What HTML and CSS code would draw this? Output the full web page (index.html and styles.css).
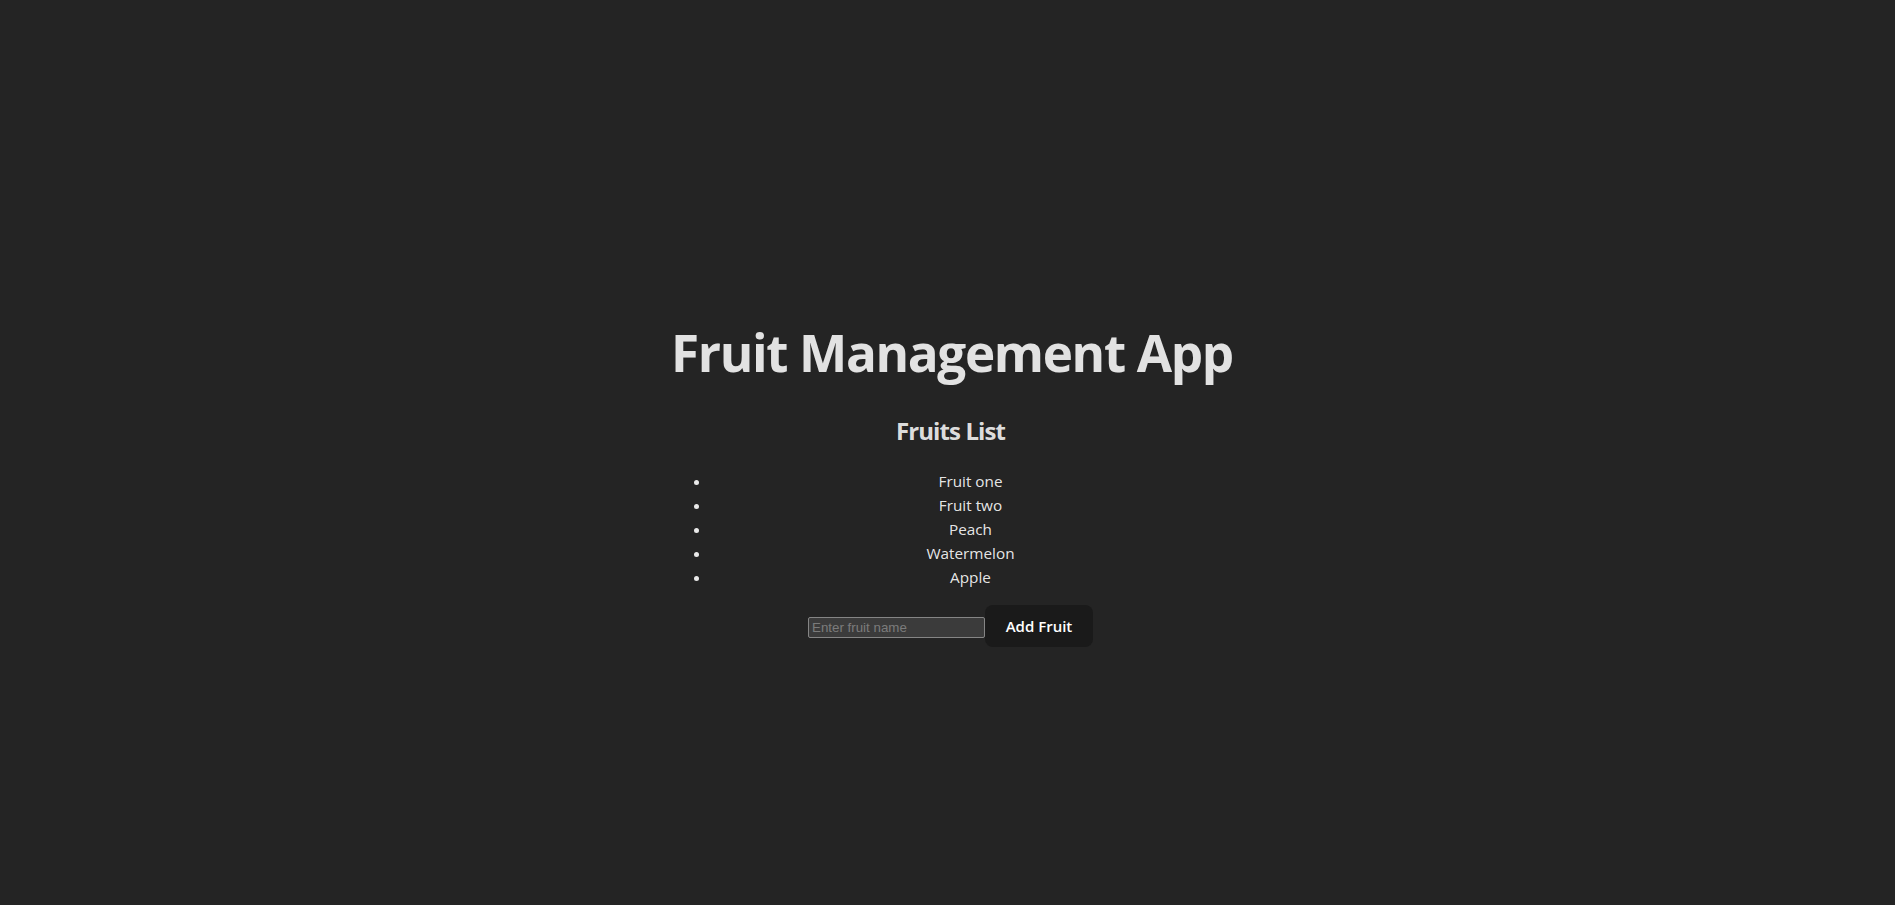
FILE: index.html
```html
<!DOCTYPE html>
<html lang="en">
<head>
<meta charset="UTF-8">
<title>Fruit Management App</title>
<link rel="stylesheet" href="styles.css">
</head>
<body>
<div class="root">
  <h1 class="title">Fruit Management App</h1>
  <h2 class="subtitle">Fruits List</h2>
  <ul class="fruit-list">
    <li>Fruit one</li>
    <li>Fruit two</li>
    <li>Peach</li>
    <li>Watermelon</li>
    <li>Apple</li>
  </ul>
  <div class="add-row">
    <input class="fruit-input" type="text" placeholder="Enter fruit name">
    <button class="add-btn" type="button">Add Fruit</button>
  </div>
</div>
</body>
</html>
```
FILE: styles.css
```css
html, body {
  margin: 0;
  padding: 0;
}
body {
  background: #242424;
  color: rgba(255, 255, 255, 0.87);
  font-family: "Open Sans", "Noto Sans", sans-serif;
  font-size: 16px;
  line-height: 1.5;
  min-height: 100vh;
  display: flex;
  justify-content: center;
  align-items: center;
}
.root {
  width: 559px;
  margin-left: 6px;
  padding: 34px 32px 2px;
  text-align: center;
}
.title {
  font-size: 51.2px;
  line-height: 1.1;
  font-weight: 700;
  margin: 34.3px 0 33px;
  letter-spacing: -1.35px;
  white-space: nowrap;
}
.subtitle {
  font-size: 24px;
  line-height: 1.5;
  font-weight: 700;
  margin: 19.9px 0;
  letter-spacing: -0.9px;
}
.fruit-list {
  margin: 16px 0;
  padding-left: 40px;
}
.fruit-list li {
  line-height: 24px;
  font-size: 15.3px;
  color: rgba(255, 255, 255, 0.9);
}
.add-row {
  display: flex;
  justify-content: center;
  align-items: center;
}
.fruit-input {
  box-sizing: border-box;
  width: 177px;
  height: 21px;
  margin: 2px 0 0;
  padding: 1px 3px;
  background: #3b3b3b;
  border: 1px solid #858585;
  border-radius: 2px;
  color: #fff;
  font-family: "Liberation Sans", Arial, sans-serif;
  font-size: 13.33px;
  outline: none;
}
.fruit-input::placeholder {
  color: #7b7b7b;
}
.add-btn {
  box-sizing: border-box;
  width: 108px;
  height: 42px;
  margin: 0;
  border: 1px solid transparent;
  border-radius: 8px;
  background: #1a1a1a;
  color: #fff;
  font-family: "Open Sans", sans-serif;
  font-size: 15px;
  font-weight: 600;
  cursor: pointer;
}
```
